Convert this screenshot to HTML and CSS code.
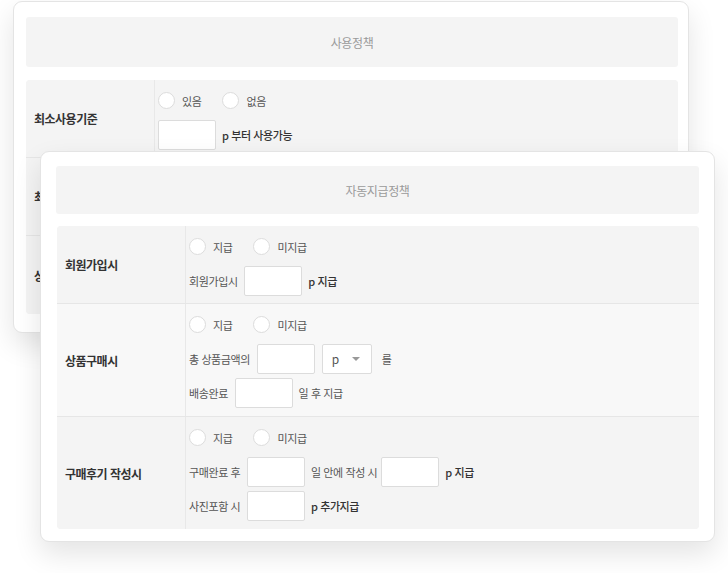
FILE: index.html
```
<!DOCTYPE html>
<html lang="ko">
<head>
    <meta charset="UTF-8">
    <meta name="viewport" content="width=device-width, initial-scale=1.0">
    <title>포인트 정책</title>
    <link rel="stylesheet" href="styles.css">
</head>
<body>
    <div class="stage">
        <!-- 뒤쪽 카드: 사용정책 (아래 행은 앞 카드에 가려짐) -->
        <section class="card card-back">
            <div class="card-title">사용정책</div>
            <div class="policy">
                <div class="row">
                    <div class="row-label">최소사용기준</div>
                    <div class="row-body">
                        <div class="choices">
                            <label class="choice"><input type="radio" name="min"> 있음</label>
                            <label class="choice"><input type="radio" name="min"> 없음</label>
                        </div>
                        <div class="line"><input type="text" class="box"><span class="unit">p 부터 사용가능</span></div>
                    </div>
                </div>
                <div class="row row-hidden">
                    <div class="row-label">최대</div>
                    <div class="row-body"></div>
                </div>
                <div class="row row-hidden">
                    <div class="row-label">상품</div>
                    <div class="row-body"></div>
                </div>
            </div>
        </section>

        <!-- 앞쪽 카드: 자동지급정책 -->
        <section class="card card-front">
            <div class="card-title">자동지급정책</div>
            <div class="policy">
                <div class="row">
                    <div class="row-label">회원가입시</div>
                    <div class="row-body">
                        <div class="choices">
                            <label class="choice"><input type="radio" name="join"> 지급</label>
                            <label class="choice"><input type="radio" name="join"> 미지급</label>
                        </div>
                        <div class="line">회원가입시 <input type="text" class="box"><span class="unit">p 지급</span></div>
                    </div>
                </div>
                <div class="row row-light">
                    <div class="row-label">상품구매시</div>
                    <div class="row-body">
                        <div class="choices">
                            <label class="choice"><input type="radio" name="buy"> 지급</label>
                            <label class="choice"><input type="radio" name="buy"> 미지급</label>
                        </div>
                        <div class="line">총 상품금액의 <input type="text" class="box">
                            <span class="select">p<span class="caret"></span></span>
                            <span class="after">를</span>
                        </div>
                        <div class="line">배송완료 <input type="text" class="box"><span class="after">일 후 지급</span></div>
                    </div>
                </div>
                <div class="row">
                    <div class="row-label">구매후기 작성시</div>
                    <div class="row-body">
                        <div class="choices">
                            <label class="choice"><input type="radio" name="review"> 지급</label>
                            <label class="choice"><input type="radio" name="review"> 미지급</label>
                        </div>
                        <div class="line">구매완료 후 <input type="text" class="box"><span class="after">일 안에 작성 시</span> <input type="text" class="box"><span class="unit">p 지급</span></div>
                        <div class="line">사진포함 시 <input type="text" class="box"><span class="unit">p 추가지급</span></div>
                    </div>
                </div>
            </div>
        </section>
    </div>
</body>
</html>
```

FILE: styles.css
```
* {
    box-sizing: border-box;
    margin: 0;
    padding: 0;
    font-family: "Noto Sans CJK KR", "Noto Sans", sans-serif;
}

body {
    background-color: #fff;
    width: 728px;
    height: 573px;
    overflow: hidden;
}

.stage {
    position: relative;
    padding: 1px 0 0 13px;
}

/* Cards */
.card {
    background: #fff;
    border: 1px solid #e4e4e4;
    border-radius: 9px;
    box-shadow: 0 12px 28px rgba(0, 0, 0, 0.11);
}

.card-back {
    width: 676px;
    height: 332px;
    padding: 15px 10px 0 12px;
}

.card-front {
    position: absolute; /* stacked window over the back card */
    left: 40px;
    top: 151px;
    width: 675px;
    height: 391px;
    padding: 14px 15px 0 15px;
}

.card-title {
    height: 50px;
    background: #f4f4f4;
    border-radius: 3px;
    color: #9a9a9a;
    font-size: 12px;
    letter-spacing: -0.4px;
    display: flex;
    align-items: center;
    justify-content: center;
    margin-bottom: 13px;
}

.card-front .card-title {
    height: 48px;
    margin-bottom: 12px;
}

/* Policy table */
.policy {
    border-radius: 4px;
    overflow: hidden;
    background: #f4f4f4;
}

.card-front .policy {
    margin-left: 1px;
}

.row {
    display: flex;
    background: #f4f4f4;
    border-bottom: 1px solid #e6e6e6;
}

.row:last-child {
    border-bottom: none;
}

.row-light {
    background: #f8f8f8;
}

.row-hidden {
    height: 78px;
}

.row-label {
    width: 129px;
    flex-shrink: 0;
    display: flex;
    align-items: center;
    padding-left: 8px;
    border-right: 1px solid #e8e8e8;
    font-size: 12px;
    font-weight: 700;
    color: #333;
    letter-spacing: -0.5px;
}

.row-body {
    flex: 1;
    padding: 12px 4px 8px 3px;
    font-size: 11px;
    color: #555;
    letter-spacing: -0.4px;
}

.row:first-child .row-body {
    padding-bottom: 7px;
}

/* Radios */
.choices {
    display: flex;
    gap: 21px;
    height: 17px;
    margin-bottom: 11px;
}

.choice {
    display: flex;
    align-items: center;
    gap: 7px;
}

.choice input {
    appearance: none;
    -webkit-appearance: none;
    width: 17px;
    height: 17px;
    border: 1px solid #dcdcdc;
    border-radius: 50%;
    background: #fff;
    margin: 0;
}

/* Input lines */
.line {
    display: flex;
    align-items: center;
    gap: 4px;
    height: 30px;
    white-space: pre;
}

.line + .line {
    margin-top: 4px;
}

.box {
    width: 58px;
    height: 30px;
    border: 1px solid #dcdcdc;
    border-radius: 2px;
    background: #fff;
    outline: none;
}

.unit {
    margin-left: 2px;
    color: #333;
    font-weight: 500;
}

.after {
    margin-left: 2px;
}

.select {
    position: relative;
    margin-left: 3px;
    margin-right: 4px;
    width: 50px;
    height: 30px;
    border: 1px solid #dcdcdc;
    border-radius: 2px;
    background: #fff;
    padding-left: 9px;
    font-size: 12px;
    line-height: 27px;
    color: #555;
}

.caret {
    position: absolute;
    right: 11px;
    top: 12px;
    width: 0;
    height: 0;
    border-left: 4px solid transparent;
    border-right: 4px solid transparent;
    border-top: 4px solid #999;
}
```
